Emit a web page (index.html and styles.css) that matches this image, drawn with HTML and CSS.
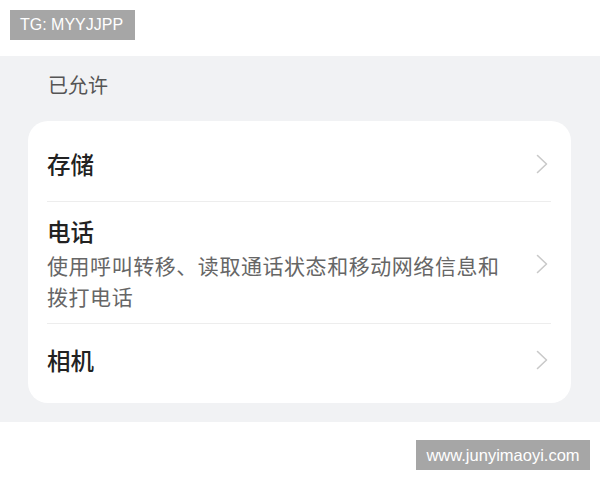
FILE: index.html
```html
<!DOCTYPE html>
<html lang="zh">
<head>
<meta charset="utf-8">
<link rel="stylesheet" href="styles.css">
</head>
<body>
<div class="top">
  <span class="badge">TG: MYYJJPP</span>
</div>
<div class="panel">
  <div class="section-title">已允许</div>
  <div class="card">
    <div class="row first">
      <div class="texts"><div class="title">存储</div></div>
      <svg class="chev" width="12" height="20" viewBox="0 0 12 20"><path d="M1.5 1.5 L10.5 10 L1.5 18.5" fill="none" stroke="#c9c9c9" stroke-width="1.6" stroke-linecap="round" stroke-linejoin="round"/></svg>
    </div>
    <div class="row tall">
      <div class="texts">
        <div class="title">电话</div>
        <div class="sub">使用呼叫转移、读取通话状态和移动网络信息和<br>拨打电话</div>
      </div>
      <svg class="chev" width="12" height="20" viewBox="0 0 12 20"><path d="M1.5 1.5 L10.5 10 L1.5 18.5" fill="none" stroke="#c9c9c9" stroke-width="1.6" stroke-linecap="round" stroke-linejoin="round"/></svg>
    </div>
    <div class="row last">
      <div class="texts"><div class="title">相机</div></div>
      <svg class="chev" width="12" height="20" viewBox="0 0 12 20"><path d="M1.5 1.5 L10.5 10 L1.5 18.5" fill="none" stroke="#c9c9c9" stroke-width="1.6" stroke-linecap="round" stroke-linejoin="round"/></svg>
    </div>
  </div>
</div>
<div class="bottom">
  <span class="badge">www.junyimaoyi.com</span>
</div>
</body>
</html>
```
FILE: styles.css
```css
html, body {
  margin: 0;
  padding: 0;
  background: #ffffff;
  width: 600px;
  height: 480px;
  overflow: hidden;
  font-family: "Noto Sans CJK SC", "Noto Sans", sans-serif;
}
.top {
  height: 56px;
  padding: 10px 0 0 10px;
  box-sizing: border-box;
}
.badge {
  display: inline-block;
  background: #a6a6a6;
  color: #ffffff;
  font-family: "Liberation Sans", Arial, sans-serif;
  font-size: 16px;
  line-height: 30px;
  height: 30px;
  padding: 0 10px;
}
.top .badge {
  width: 125px;
  box-sizing: border-box;
}
.panel {
  background: #f1f2f4;
  height: 366px;
  padding: 0 29px 0 28px;
  box-sizing: border-box;
}
.section-title {
  height: 65px;
  padding-left: 20px;
  font-size: 20px;
  line-height: 58px;
  color: #555;
}
.card {
  background: #ffffff;
  border-radius: 20px;
  padding: 0 20px 0 19px;
}
.row {
  display: flex;
  align-items: center;
  justify-content: space-between;
  box-sizing: border-box;
  height: 80px;
}
.row + .row {
  border-top: 1px solid #ededed;
}
.row.first {
  padding-top: 6px;
}
.row.last {
  padding-bottom: 7px;
}
.row.tall {
  height: 122px;
  padding: 13px 0 11px;
}
.title {
  font-size: 23.5px;
  font-weight: 500;
  color: #222;
  line-height: 32px;
}
.sub {
  font-size: 21px;
  line-height: 31px;
  color: #666;
  letter-spacing: 0.55px;
  margin-top: 3px;
}
.chev {
  flex: none;
  margin-right: 3px;
}
.bottom {
  display: flex;
  justify-content: flex-end;
  padding: 18px 10px 0 0;
}
.bottom .badge {
  width: 174px;
  box-sizing: border-box;
  text-align: center;
  padding: 0;
  font-size: 16.5px;
}
```
